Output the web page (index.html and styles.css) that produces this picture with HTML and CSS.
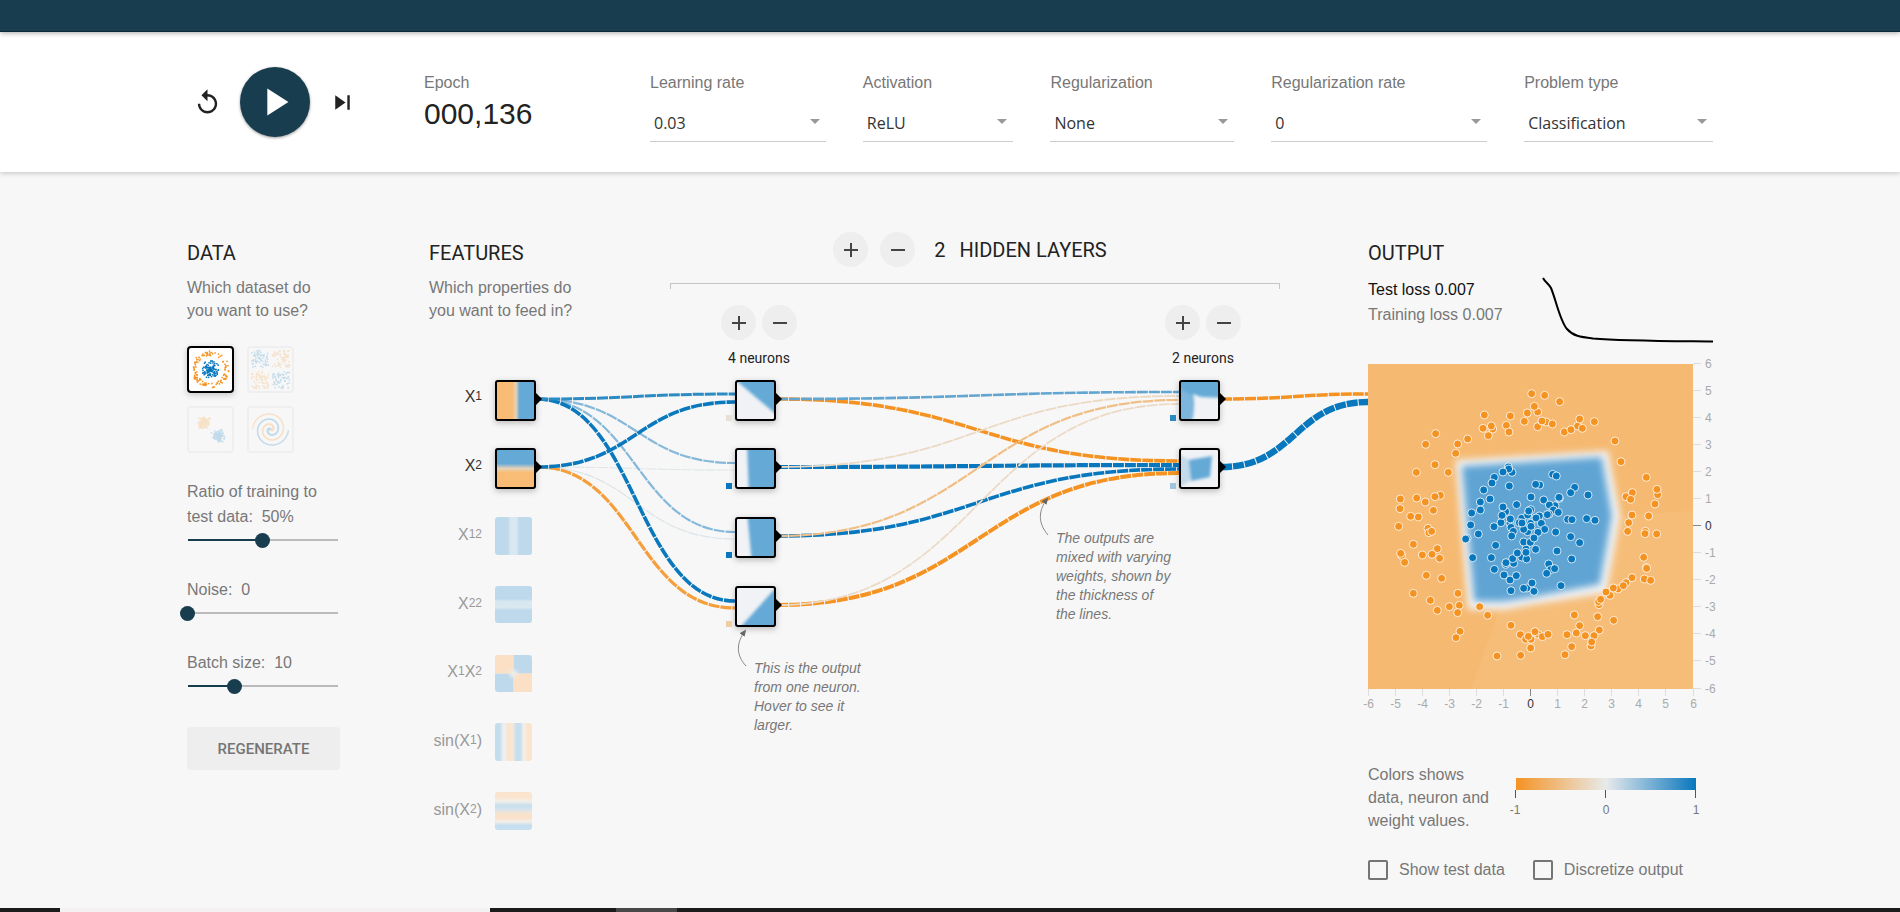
FILE: index.html
```html
<!DOCTYPE html>
<html lang="en">
<head>
<meta charset="utf-8">
<title>Neural Network Playground</title>
<link rel="stylesheet" href="styles.css">
</head>
<body>
<header class="banner"></header>

<section class="top-controls">
  <div class="container controls-grid">
    <div class="timeline">
      <button class="icon-button" aria-label="Reset"><svg viewBox="0 0 24 24"><path d="M12 5V1L7 6l5 5V7c3.31 0 6 2.69 6 6s-2.690 6-6 6-6-2.690-6-6H4c0 4.420 3.580 8 8 8s8-3.580 8-8-3.580-8-8-8z"/></svg></button>
      <button class="play-button" aria-label="Run"><svg viewBox="0 0 24 24"><path d="M8 5v14l11-7z"/></svg></button>
      <button class="icon-button" aria-label="Step"><svg viewBox="0 0 24 24"><path d="M6 18l8.500-6L6 6v12zM16 6v12h2V6h-2z"/></svg></button>
    </div>
    <div class="epoch">
      <span class="label">Epoch</span>
      <output class="epoch-value">000,136</output>
    </div>
    <div class="settings">
      <div class="control learning-rate"><label for="rate">Learning rate</label><div class="select"><select id="rate"><option>0.03</option></select></div></div>
      <div class="control activation"><label for="activation">Activation</label><div class="select"><select id="activation"><option>ReLU</option></select></div></div>
      <div class="control regularization"><label for="reg">Regularization</label><div class="select"><select id="reg"><option>None</option></select></div></div>
      <div class="control reg-rate"><label for="regrate">Regularization rate</label><div class="select"><select id="regrate"><option>0</option></select></div></div>
      <div class="control problem"><label for="problem">Problem type</label><div class="select"><select id="problem"><option>Classification</option></select></div></div>
    </div>
  </div>
</section>

<main class="container main-part">
  <section class="column data">
    <h4>Data</h4>
    <p>Which dataset do you want to use?</p>
    <div class="datasets">
      <button class="dataset selected" aria-label="Circle"><svg id="circle" viewBox="0 0 41 41"></svg></button>
      <button class="dataset" aria-label="Exclusive or"><svg id="xor" viewBox="0 0 41 41"></svg></button>
      <button class="dataset" aria-label="Gaussian"><svg id="gauss" viewBox="0 0 41 41"></svg></button>
      <button class="dataset" aria-label="Spiral"><svg id="spiral" viewBox="0 0 41 41"></svg></button>
    </div>
    <div class="sliders">
      <div class="slider"><label for="ratio">Ratio of training to test data:&nbsp; 50%</label><input type="range" id="ratio" min="10" max="90" value="50" style="--fill:50%"></div>
      <div class="slider"><label for="noise">Noise:&nbsp; 0</label><input type="range" id="noise" min="0" max="50" value="0" style="--fill:0%"></div>
      <div class="slider"><label for="batch">Batch size:&nbsp; 10</label><input type="range" id="batch" min="1" max="30" value="10" style="--fill:31%"></div>
    </div>
    <button class="regenerate">Regenerate</button>
  </section>

  <section class="network">
    <div class="network-head">
      <div class="column features">
        <h4>Features</h4>
        <p>Which properties do you want to feed in?</p>
      </div>
      <div class="hidden-layers">
        <div class="layers-title">
          <button class="round" aria-label="Add layer"><svg viewBox="0 0 24 24"><path d="M19 13h-6v6h-2v-6H5v-2h6V5h2v6h6v2z"/></svg></button>
          <button class="round" aria-label="Remove layer"><svg viewBox="0 0 24 24"><path d="M19 13H5v-2h14v2z"/></svg></button>
          <h4><span class="count">2</span>Hidden layers</h4>
        </div>
        <div class="bracket"></div>
        <div class="layer-controls">
          <div class="layer">
            <div class="layer-buttons">
              <button class="round" aria-label="Add neuron to layer 1"><svg viewBox="0 0 24 24"><path d="M19 13h-6v6h-2v-6H5v-2h6V5h2v6h6v2z"/></svg></button>
              <button class="round" aria-label="Remove neuron from layer 1"><svg viewBox="0 0 24 24"><path d="M19 13H5v-2h14v2z"/></svg></button>
            </div>
            <span>4 neurons</span>
          </div>
          <div class="layer">
            <div class="layer-buttons">
              <button class="round" aria-label="Add neuron to layer 2"><svg viewBox="0 0 24 24"><path d="M19 13h-6v6h-2v-6H5v-2h6V5h2v6h6v2z"/></svg></button>
              <button class="round" aria-label="Remove neuron from layer 2"><svg viewBox="0 0 24 24"><path d="M19 13H5v-2h14v2z"/></svg></button>
            </div>
            <span>2 neurons</span>
          </div>
        </div>
      </div>
    </div>

    <svg class="canvas" viewBox="0 0 939 470">
      <defs>
        <clipPath id="tile"><rect width="41" height="41" rx="3"/></clipPath>
        <clipPath id="small"><rect width="37" height="37" rx="3"/></clipPath>
        <filter id="soft" x="-30%" y="-30%" width="160%" height="160%"><feGaussianBlur stdDeviation="1.500"/></filter>
        <linearGradient id="gx1"><stop offset=".42" stop-color="#f8bc74"/><stop offset=".51" stop-color="#e6d3b8"/><stop offset=".6" stop-color="#65a9d7"/></linearGradient>
        <linearGradient id="gx2" x2="0" y2="1"><stop offset=".38" stop-color="#65a9d7"/><stop offset=".5" stop-color="#e6d3b8"/><stop offset=".6" stop-color="#f8bc74"/></linearGradient>
        <linearGradient id="sq"><stop offset=".35" stop-color="#bfd9ec"/><stop offset=".42" stop-color="#d8e7f0"/><stop offset=".58" stop-color="#d8e7f0"/><stop offset=".66" stop-color="#bfd9ec"/></linearGradient>
        <linearGradient id="sq2" x2="0" y2="1"><stop offset=".35" stop-color="#bfd9ec"/><stop offset=".42" stop-color="#d8e7f0"/><stop offset=".58" stop-color="#d8e7f0"/><stop offset=".66" stop-color="#bfd9ec"/></linearGradient>
        <linearGradient id="sin1"><stop offset=".12" stop-color="#c4dded"/><stop offset=".24" stop-color="#eef1f2"/><stop offset=".36" stop-color="#fbe4cd"/><stop offset=".48" stop-color="#f4e8da"/><stop offset=".58" stop-color="#c6deed"/><stop offset=".68" stop-color="#c6deed"/><stop offset=".78" stop-color="#f4f0ea"/><stop offset=".88" stop-color="#fbe4cd"/></linearGradient>
        <linearGradient id="sin2" x2="0" y2="1"><stop offset=".14" stop-color="#fbe4cd"/><stop offset=".24" stop-color="#f2efea"/><stop offset=".36" stop-color="#c6deed"/><stop offset=".46" stop-color="#d6e4ec"/><stop offset=".56" stop-color="#f6e4d0"/><stop offset=".68" stop-color="#fbe0c7"/><stop offset=".78" stop-color="#f2efea"/><stop offset=".88" stop-color="#c6deed"/></linearGradient>
        <marker id="head" markerWidth="7" markerHeight="6" refX="5" refY="3" orient="auto" markerUnits="userSpaceOnUse"><path d="M0 0L7 3L0 6z" fill="#666"/></marker>
      </defs>

      <g class="links">
        <path d="M108 97C207 97 207 100 306 100" stroke="#e1e7ea" stroke-width="1.200"/>
        <path d="M108 97C207 97 207 169 306 169" stroke="#dbe3e8" stroke-width="1.200"/>
        <path d="M108 29C207 29 207 93 306 93" stroke="#86b8da" stroke-width="2.200"/>
        <path d="M108 29C207 29 207 162 306 162" stroke="#86b8da" stroke-width="2.200"/>
        <path d="M108 29C207 29 207 231 306 231" stroke="#0a78bd" stroke-width="3.600"/>
        <path d="M108 29C207 29 207 24 306 24" stroke="#2d8bc4" stroke-width="3"/>
        <path d="M108 97C207 97 207 238 306 238" stroke="#f59f3c" stroke-width="3.200"/>
        <path d="M108 97C207 97 207 32 306 32" stroke="#0a78bd" stroke-width="3.600"/>
        <path d="M348 29C549 29 549 91 750 91" stroke="#f59322" stroke-width="3.600"/>
        <path d="M348 29C549 29 549 22 750 22" stroke="#62a5d1" stroke-width="2.600"/>
        <path d="M348 97C549 97 549 95 750 95" stroke="#0877bd" stroke-width="4.200"/>
        <path d="M348 97C549 97 549 26 750 26" stroke="#ecd9c4" stroke-width="1.800"/>
        <path d="M348 166C549 166 549 99 750 99" stroke="#0877bd" stroke-width="3.600"/>
        <path d="M348 166C549 166 549 30 750 30" stroke="#f0bf87" stroke-width="2.200"/>
        <path d="M348 235C549 235 549 103 750 103" stroke="#f59322" stroke-width="4"/>
        <path d="M348 235C549 235 549 34 750 34" stroke="#ecdac6" stroke-width="1.800"/>
        <path d="M792 29C866 29 866 24 939 24" stroke="#f59322" stroke-width="3.500"/>
        <path d="M792 97C866 97 866 32 939 32" stroke="#0877bd" stroke-width="6.500"/>
      </g>

      <g class="feature-labels">
        <text x="53" y="32" class="on">X<tspan class="sub" dy="-2">1</tspan></text>
        <text x="53" y="101" class="on">X<tspan class="sub" dy="-2">2</tspan></text>
        <text x="53" y="170">X<tspan class="sub" dy="-2">12</tspan></text>
        <text x="53" y="239">X<tspan class="sub" dy="-2">22</tspan></text>
        <text x="53" y="307">X<tspan class="sub" dy="-2">1</tspan><tspan dy="2">X</tspan><tspan class="sub" dy="-2">2</tspan></text>
        <text x="53" y="376">sin(X<tspan class="sub" dy="-2">1</tspan><tspan dy="2">)</tspan></text>
        <text x="53" y="445">sin(X<tspan class="sub" dy="-2">2</tspan><tspan dy="2">)</tspan></text>
      </g>

      <g transform="translate(66 147)"><rect width="37" height="38" rx="3" fill="url(#sq)"/></g>
      <g transform="translate(66 216)"><rect width="37" height="37" rx="3" fill="url(#sq2)"/></g>
      <g transform="translate(66 285)" clip-path="url(#small)">
        <rect width="37" height="37" fill="#bfd9ec"/>
        <g fill="#fbe0c5"><rect width="18" height="18"/><rect x="19" y="19" width="18" height="18"/></g>
        <path d="M18.500 0V37M0 18.500H37" stroke="#e6e2da" stroke-width="1"/>
        <circle cx="18.500" cy="18.500" r="4" fill="#ebebe8" filter="url(#soft)"/>
      </g>
      <g transform="translate(66 353)"><rect width="37" height="38" rx="3" fill="url(#sin1)"/></g>
      <g transform="translate(66 422)"><rect width="37" height="38" rx="3" fill="url(#sin2)"/></g>

      <g transform="translate(66 10)"><g class="node"><rect width="41" height="41" rx="3" fill="url(#gx1)"/><rect class="frame" x="1" y="1" width="39" height="39" rx="2"/></g><path class="tip" d="M40 12l7 7-7 7z"/></g>
      <g transform="translate(66 78)"><g class="node"><rect width="41" height="41" rx="3" fill="url(#gx2)"/><rect class="frame" x="1" y="1" width="39" height="39" rx="2"/></g><path class="tip" d="M40 12l7 7-7 7z"/></g>

      <g transform="translate(306 10)"><g class="node"><g clip-path="url(#tile)"><rect width="41" height="41" fill="#f0f2f5"/><path class="blue" d="M-4 -4L50 42V-8z"/></g><rect class="frame" x="1" y="1" width="39" height="39" rx="2"/></g><path class="tip" d="M40 12l7 7-7 7z"/><rect x="-9" y="35" width="6" height="6" fill="#e6e0d5"/></g>
      <g transform="translate(306 78)"><g class="node"><g clip-path="url(#tile)"><rect width="41" height="41" fill="#f0f2f5"/><path class="blue" d="M12 -6L14 47H52V-6z"/></g><rect class="frame" x="1" y="1" width="39" height="39" rx="2"/></g><path class="tip" d="M40 12l7 7-7 7z"/><rect x="-9" y="35" width="6" height="6" fill="#0877bd"/></g>
      <g transform="translate(306 147)"><g class="node"><g clip-path="url(#tile)"><rect width="41" height="41" fill="#f0f2f5"/><path class="blue" d="M12 -6L17 47H52V-6z"/></g><rect class="frame" x="1" y="1" width="39" height="39" rx="2"/></g><path class="tip" d="M40 12l7 7-7 7z"/><rect x="-9" y="35" width="6" height="6" fill="#0877bd"/></g>
      <g transform="translate(306 216)"><g class="node"><g clip-path="url(#tile)"><rect width="41" height="41" fill="#f0f2f5"/><path class="blue" d="M2 45L46 -4V52H2z"/></g><rect class="frame" x="1" y="1" width="39" height="39" rx="2"/></g><path class="tip" d="M40 12l7 7-7 7z"/><rect x="-9" y="35" width="6" height="6" fill="#f0cda3"/></g>
      <g transform="translate(750 10)"><g class="node"><g clip-path="url(#tile)"><rect width="41" height="41" fill="#65a9d7"/><path d="M-4 6L14 16V46H-4z" fill="#7db5dc" filter="url(#soft)"/><path d="M14 14L22 17L46 18V48H11Q17 30 14 14z" fill="#f0f2f5" filter="url(#soft)"/></g><rect class="frame" x="1" y="1" width="39" height="39" rx="2"/></g><path class="tip" d="M40 12l7 7-7 7z"/><rect x="-9" y="35" width="6" height="6" fill="#2b88c2"/></g>
      <g transform="translate(750 78)"><g class="node"><g clip-path="url(#tile)"><rect width="41" height="41" fill="#f0f2f5"/><path d="M-4 4L12 13V32L-4 42z" fill="#c3daea" filter="url(#soft)"/><path class="blue" d="M10 12L33 8L31 29L12 33z"/></g><rect class="frame" x="1" y="1" width="39" height="39" rx="2"/></g><path class="tip" d="M40 12l7 7-7 7z"/><rect x="-9" y="35" width="6" height="6" fill="#a1c5dc"/></g>

      <g class="callout">
        <path d="M317 296C306 284 308 272 316 261" marker-end="url(#head)"/>
        <text y="303"><tspan x="325">This is the output</tspan><tspan x="325" dy="19">from one neuron.</tspan><tspan x="325" dy="19">Hover to see it</tspan><tspan x="325" dy="19">larger.</tspan></text>
        <path d="M619 165C608 152 610 140 618 129" marker-end="url(#head)"/>
        <text y="173"><tspan x="627">The outputs are</tspan><tspan x="627" dy="19">mixed with varying</tspan><tspan x="627" dy="19">weights, shown by</tspan><tspan x="627" dy="19">the thickness of</tspan><tspan x="627" dy="19">the lines.</tspan></text>
      </g>
    </svg>
  </section>

  <section class="column output">
    <h4>Output</h4>
    <div class="metrics">
      <div class="losses">
        <div class="test-loss">Test loss 0.007</div>
        <div>Training loss 0.007</div>
      </div>
      <svg class="loss-chart" viewBox="0 0 170 66"><path d="M0 1C2 5 6 7 8 11C13 23 17 44 24 52C30 59 37 60 50 61.500C80 64 120 64 170 64.500"/></svg>
    </div>

    <svg class="plot" viewBox="0 0 345 360">
      <defs>
        <clipPath id="area"><rect width="975" height="975"/></clipPath>
        <filter id="edge" x="-20%" y="-20%" width="140%" height="140%"><feGaussianBlur stdDeviation="11"/></filter>
      </defs>
      <g transform="translate(0 10) scale(.33333)" clip-path="url(#area)">
        <rect width="975" height="975" fill="#f5b971"/>
        <path d="M735 455L975 440V975H310L400 720z" fill="#f6bd79"/>
        <path d="M262 288L720 260L757 455L715 687L500 721L410 737L300 737z" fill="#f1f3f5" filter="url(#edge)"/>
        <path d="M282 307L701 280L731 455L695 661L492 699L410 712L319 712z" fill="#60a4d4" filter="url(#edge)"/>
        <g id="points"></g>
      </g>
      <g id="axes" class="axes"></g>
    </svg>

    <div class="legend">
      <p>Colors shows data, neuron and weight values.</p>
      <svg class="colormap" viewBox="0 0 200 56">
        <defs><linearGradient id="scale"><stop offset="0" stop-color="#f59322"/><stop offset=".5" stop-color="#e8eaeb"/><stop offset="1" stop-color="#0877bd"/></linearGradient></defs>
        <rect x="10" y="15" width="180" height="12" fill="url(#scale)"/>
        <path d="M9.500 27v8M99.500 27v8M189.500 27v8" stroke="#555"/>
        <text x="9" y="51">-1</text><text x="100" y="51">0</text><text x="190" y="51">1</text>
      </svg>
    </div>
    <div class="checks">
      <label><input type="checkbox">Show test data</label>
      <label><input type="checkbox">Discretize output</label>
    </div>
  </section>
</main>

<footer class="taskbar"></footer>
<script src="script.js"></script>
</body>
</html>
```

FILE: styles.css
```css
* { box-sizing: border-box; }

body {
  margin: 0;
  min-height: 100vh;
  display: flex;
  flex-direction: column;
  background: #f7f7f7;
  color: #777;
  font: 16px/23px "Liberation Sans", Arial, sans-serif;
}

button { border: 0; padding: 0; background: none; cursor: pointer; }
svg { display: block; }
p { margin: 0; }

h4 {
  margin: 0;
  color: #222;
  font: 400 20px/24px Roboto, sans-serif;
  text-transform: uppercase;
}

.container { width: 100%; max-width: 1526px; margin: 0 auto; }

.banner {
  height: 32px;
  background: #183d4e;
  border-bottom: 1px solid #0b2a38;
  box-shadow: 0 1px 5px rgba(0, 0, 0, .35);
  z-index: 1;
}

/* Top controls */
.top-controls {
  height: 140px;
  padding-top: 35px;
  background: #fff;
  box-shadow: 0 1px 5px rgba(0, 0, 0, .22);
}
.controls-grid { display: grid; grid-template-columns: 237px 226px 1fr; }
.timeline { display: flex; align-items: center; gap: 18px; height: 70px; padding-left: 6px; }
.icon-button svg { width: 29px; height: 29px; fill: #222; }
.play-button {
  display: grid;
  place-items: center;
  width: 70px;
  height: 70px;
  border-radius: 50%;
  background: #183d4e;
  box-shadow: 0 1px 3px rgba(0, 0, 0, .4);
}
.play-button svg { width: 46px; height: 46px; fill: #fff; }
.epoch, .control { display: flex; flex-direction: column; padding-top: 6px; line-height: 20px; }
.epoch-value { margin-top: 3px; color: #222; font-size: 30px; line-height: 36px; }
.settings { display: flex; gap: 37px; }
.learning-rate { flex: 175; }
.activation { flex: 150; }
.regularization { flex: 183; }
.reg-rate { flex: 215; }
.problem { flex: 188; }
.select { position: relative; margin-top: 18px; border-bottom: 1px solid #ccc; }
.select::after {
  content: "";
  position: absolute;
  right: 6px;
  top: 8px;
  border: 5px solid transparent;
  border-top-color: #999;
  pointer-events: none;
}
select {
  appearance: none;
  width: 100%;
  height: 30px;
  padding: 0 0 6px 4px;
  border: 0;
  background: none;
  color: #333;
  font: 16px/24px "Open Sans", sans-serif;
}

/* Main area */
.main-part { display: grid; grid-template-columns: 153px 1fr 345px; padding-top: 60px; }
.column { padding-top: 9px; }
.column > p { margin-top: 11px; }
.datasets { display: grid; grid-template-columns: 47px 47px; gap: 13px; margin-top: 24px; }
.dataset { height: 47px; padding: 1px; border: 2px solid #e4e4e4; border-radius: 4px; opacity: .4; }
.dataset svg { width: 41px; height: 41px; }
.dataset:not(.selected) svg { opacity: .55; }
.dataset.selected { border-color: #000; background: #fff; opacity: 1; box-shadow: 0 2px 6px rgba(0, 0, 0, .2); }
.sliders { display: grid; gap: 29px; margin-top: 26px; }
.slider { display: grid; gap: 3px; line-height: 25px; }
input[type="range"] {
  appearance: none;
  width: 165px;
  height: 16px;
  margin: 0 -7px;
  background: linear-gradient(to right, #183d4e var(--fill), #bbb var(--fill)) no-repeat center / calc(100% - 15px) 2px;
}
input[type="range"]::-webkit-slider-thumb {
  appearance: none;
  width: 15px;
  height: 15px;
  border-radius: 50%;
  background: #183d4e;
}
.regenerate {
  width: 100%;
  height: 43px;
  margin-top: 33px;
  border-radius: 4px;
  background: #eee;
  color: #757575;
  font: 500 15px/20px Roboto, sans-serif;
  text-transform: uppercase;
}

/* Network */
.network { margin-left: 89px; }
.network-head { display: grid; grid-template-columns: 241px 1fr 88px; }
.features p { width: 150px; }
.layers-title { display: flex; align-items: center; justify-content: center; gap: 12px; padding-right: 10px; }
.layers-title h4 { margin-left: 7px; }
.count { margin-right: 14px; }
.round {
  display: grid;
  place-items: center;
  width: 35px;
  height: 35px;
  border-radius: 50%;
  background: #eee;
}
.round svg { width: 24px; height: 24px; fill: #444; }
.bracket { height: 6px; margin-top: 16px; border: 1px solid #c4c4c4; border-bottom: 0; }
.layer-controls { display: flex; justify-content: space-between; margin-top: 16px; padding: 0 39px 0 51px; }
.layer { color: #222; font: 14px/20px Roboto, sans-serif; text-align: center; }
.layer-buttons { display: flex; gap: 6px; margin-bottom: 8px; }
.canvas { width: 100%; margin-top: 2px; overflow: visible; }
.links path { fill: none; stroke-dasharray: 11 1; }
.feature-labels { font-size: 16px; text-anchor: end; fill: #999; }
.feature-labels .on { fill: #333; }
.feature-labels .sub { font-size: 12px; }
.node { filter: drop-shadow(0 2px 3px rgba(0, 0, 0, .25)); }
.frame { fill: none; stroke: #000; stroke-width: 2; }
.blue { fill: #65a9d7; filter: url(#soft); }
.tip { fill: #000; }
.callout path { fill: none; stroke: #888; stroke-width: 1; }
.callout text { fill: #777; font-size: 14px; font-style: italic; }

/* Output */
.metrics { display: flex; justify-content: space-between; margin-top: 12px; line-height: 25px; }
.test-loss { color: #111; }
.loss-chart { width: 170px; height: 66px; overflow: visible; }
.loss-chart path { fill: none; stroke: #000; stroke-width: 2; }
.plot { width: 100%; margin-top: 11px; overflow: visible; }
.point { stroke: #fff; stroke-opacity: .8; stroke-width: 3; }
.axes { fill: #aaa; font-size: 12px; }
.axes path { stroke: #ddd; stroke-width: 1; }
.axes .zero { fill: #333; stroke: none; }
.axes path.zero { stroke: #888; }
.legend { display: flex; gap: 10px; margin-top: 49px; }
.legend p { width: 128px; }
.colormap { width: 200px; height: 56px; overflow: visible; }
.colormap text { fill: #777; font-size: 12px; text-anchor: middle; }
.checks { display: flex; gap: 28px; margin-top: 26px; }
.checks label { display: flex; align-items: center; gap: 11px; }
input[type="checkbox"] {
  appearance: none;
  width: 20px;
  height: 20px;
  margin: 0;
  border: 2px solid #757575;
  border-radius: 2px;
}

.taskbar {
  height: 4px;
  margin-top: auto;
  background: linear-gradient(to right, #1b1b1b 60px, #f3f1f2 60px 490px, #1b1b1b 490px 616px, #484848 616px 677px, #1b1b1b 677px);
}
```

FILE: script.js
```js
const ORANGE = "#f59322";
const BLUE = "#0877bd";
const NS = "http://www.w3.org/2000/svg";

function add(parent, tag, attrs, text) {
  const el = document.createElementNS(NS, tag);
  for (const k in attrs) el.setAttribute(k, attrs[k]);
  if (text !== undefined) el.textContent = text;
  parent.appendChild(el);
}

const samples = [
  { color: ORANGE, dx: -24, data: "515,101 533,156 523,139 502,159 493,184 451,168 533,200 439,196 447,216 373,165 369,205 398,207 394,198 385,227 323,237 293,252 287,280 227,221 197,253 225,314 169,337 265,337 121,417 170,414 241,406 225,410 196,426 120,446 220,451 152,469 175,471 116,499 204,505 207,518 215,514 160,553 232,566 125,586 122,580 134,607 187,585 216,583 239,595 199,646 245,655 294,700 160,700 211,721 232,751 268,740 298,736 293,758 359,740 383,766 300,814 288,833 453,796 481,824 497,838 513,838 505,829 512,864 411,888 482,886" },
  { color: ORANGE, dx: 486, data: "44,106 89,125 48,186 36,183 67,192 103,216 123,209 143,198 149,177 157,205 193,185 255,243 273,305 349,352 288,410 307,398 302,418 383,404 381,388 375,432 306,465 356,468 296,488 293,514 346,514 345,521 380,522 341,592 349,622 350,625 343,657 362,661 306,653 288,668 264,687 280,677 250,684 240,706 228,696 207,734 206,725 212,718 133,765 203,770 251,781 149,797 208,810 111,824 139,819 166,827 192,827 183,858 185,846 125,860 105,884 25,823 37,830 54,823 15,815" },
  { color: BLUE, dx: -24, data: "445,321 456,337 446,327 429,336 403,352 396,369 448,378 371,390 390,417 361,426 361,450 335,459 332,495 355,522 321,535 317,537 402,500 437,455 429,441 423,488 426,466 450,490 451,477 453,502 460,514 455,528 470,434 513,411 407,556 338,593 394,593 403,628 437,613 461,610 438,608 458,596 432,645 450,660 469,647 453,692 485,591 472,579 500,597 498,567 498,577 491,546 511,547 503,515 491,508 485,475 478,488 486,489 503,465 512,449 506,453 512,490 513,499 527,568 501,684 491,685" },
  { color: BLUE, dx: 486, data: "68,343 79,348 29,375 17,373 134,382 122,398 174,405 88,415 87,412 41,420 75,437 58,435 70,450 85,457 57,462 52,464 28,468 18,474 34,490 44,508 24,517 12,534 113,478 126,479 170,476 195,481 77,516 122,530 149,548 81,573 125,597 56,612 62,629 74,626 50,640 93,677 6,669 12,694" }
];

const points = document.getElementById("points");
for (const s of samples) {
  for (const pair of s.data.split(" ")) {
    const [x, y] = pair.split(",").map(Number);
    add(points, "circle", { cx: x + s.dx, cy: y - 12, r: 12, fill: s.color, class: "point" });
  }
}

const axes = document.getElementById("axes");
for (let v = -6; v <= 6; v++) {
  const zero = v === 0 ? "zero" : "";
  const x = Math.floor((v + 6) * 325 / 12) + 0.5;
  const y = Math.floor((6 - v) * 325 / 12) + 9.5;
  add(axes, "path", { d: `M${x} 335v7`, class: zero });
  add(axes, "path", { d: `M325 ${y}h8`, class: zero });
  add(axes, "text", { x, y: 354, "text-anchor": "middle", class: zero }, v);
  add(axes, "text", { x: 337, y: y + 4, class: zero }, v);
}

let state = 11;
function random() {
  state = (state + 0x6D2B79F5) | 0;
  let t = Math.imul(state ^ (state >>> 15), 1 | state);
  t = (t + Math.imul(t ^ (t >>> 7), 61 | t)) ^ t;
  return ((t ^ (t >>> 14)) >>> 0) / 4294967296;
}
function dot(id, x, y, color) {
  add(document.getElementById(id), "rect", { x: x - 0.75, y: y - 0.75, width: 1.5, height: 1.5, fill: color });
}
for (let i = 0; i < 120; i++) {
  const a = random() * Math.PI * 2;
  const r = 14 + random() * 4.5;
  dot("circle", 20.5 + r * Math.cos(a), 20.5 + r * Math.sin(a), ORANGE);
  const b = random() * Math.PI * 2;
  const q = random() * 9;
  dot("circle", 20.5 + q * Math.cos(b), 20.5 + q * Math.sin(b), BLUE);
}
for (let i = 0; i < 240; i++) {
  const x = random() * 34 - 17;
  const y = random() * 34 - 17;
  dot("xor", 20.5 + x + Math.sign(x) * 2, 20.5 + y + Math.sign(y) * 2, x * y > 0 ? BLUE : ORANGE);
}
for (let i = 0; i < 130; i++) {
  const g = () => (random() + random() + random() - 1.5) * 5;
  dot("gauss", 14 + g(), 14 + g(), ORANGE);
  dot("gauss", 28 + g(), 27 + g(), BLUE);
}
for (let i = 0; i < 130; i++) {
  const r = i / 130 * 18;
  const t = 1.75 * i / 130 * 2 * Math.PI;
  dot("spiral", 20.5 + r * Math.sin(t), 20.5 + r * Math.cos(t), ORANGE);
  dot("spiral", 20.5 - r * Math.sin(t), 20.5 - r * Math.cos(t), BLUE);
}
```
